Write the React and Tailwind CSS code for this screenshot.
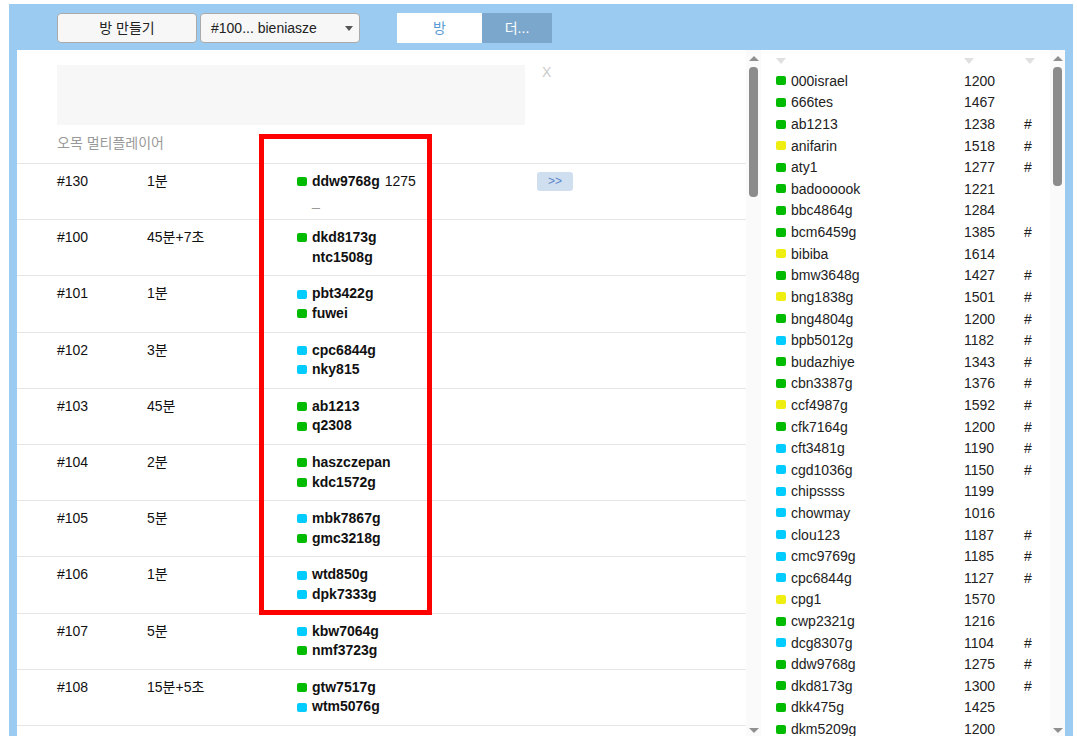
const FONT = "font-['Liberation_Sans','Noto_Sans_CJK_KR',sans-serif]";

const G = "bg-[#00bb00]";
const B = "bg-[#00ccff]";
const Y = "bg-[#eeee11]";

const rooms = [
  { id: "#100", time: "45분+7초", players: [[G, "dkd8173g"], [null, "ntc1508g"]] },
  { id: "#101", time: "1분", players: [[B, "pbt3422g"], [G, "fuwei"]] },
  { id: "#102", time: "3분", players: [[B, "cpc6844g"], [B, "nky815"]] },
  { id: "#103", time: "45분", players: [[G, "ab1213"], [G, "q2308"]] },
  { id: "#104", time: "2분", players: [[G, "haszczepan"], [G, "kdc1572g"]] },
  { id: "#105", time: "5분", players: [[B, "mbk7867g"], [G, "gmc3218g"]] },
  { id: "#106", time: "1분", players: [[B, "wtd850g"], [B, "dpk7333g"]] },
  { id: "#107", time: "5분", players: [[B, "kbw7064g"], [G, "nmf3723g"]] },
  { id: "#108", time: "15분+5초", players: [[G, "gtw7517g"], [B, "wtm5076g"]] },
];

const users = [
  [G, "000israel", "1200", ""],
  [G, "666tes", "1467", ""],
  [G, "ab1213", "1238", "#"],
  [Y, "anifarin", "1518", "#"],
  [G, "aty1", "1277", "#"],
  [G, "badoooook", "1221", ""],
  [G, "bbc4864g", "1284", ""],
  [G, "bcm6459g", "1385", "#"],
  [Y, "bibiba", "1614", ""],
  [G, "bmw3648g", "1427", "#"],
  [Y, "bng1838g", "1501", "#"],
  [G, "bng4804g", "1200", "#"],
  [B, "bpb5012g", "1182", "#"],
  [G, "budazhiye", "1343", "#"],
  [G, "cbn3387g", "1376", "#"],
  [Y, "ccf4987g", "1592", "#"],
  [G, "cfk7164g", "1200", "#"],
  [B, "cft3481g", "1190", "#"],
  [B, "cgd1036g", "1150", "#"],
  [B, "chipssss", "1199", ""],
  [B, "chowmay", "1016", ""],
  [B, "clou123", "1187", "#"],
  [B, "cmc9769g", "1185", "#"],
  [B, "cpc6844g", "1127", "#"],
  [Y, "cpg1", "1570", ""],
  [G, "cwp2321g", "1216", ""],
  [B, "dcg8307g", "1104", "#"],
  [G, "ddw9768g", "1275", "#"],
  [G, "dkd8173g", "1300", "#"],
  [G, "dkk475g", "1425", ""],
  [G, "dkm5209g", "1200", ""],
];

function Dot({ color }) {
  return <span className={`mr-[5px] inline-block h-[9px] w-[10px] shrink-0 rounded-[2px] ${color}`} />;
}

function Scrollbar({ thumb }) {
  return (
    <div className="flex w-[15px] shrink-0 flex-col items-center bg-[#fafafa] pt-[6px]">
      <span className="h-0 w-0 border-x-[5px] border-b-[5px] border-x-transparent border-b-[#8f8f8f]" />
      <div className={`mt-[6px] w-[9px] rounded-[4px] bg-[#8c8c8c] ${thumb}`} />
      <span className="mt-auto mb-[3px] h-0 w-0 border-x-[5px] border-t-[5px] border-x-transparent border-t-[#8f8f8f]" />
    </div>
  );
}

function SortMark() {
  return <span className="block h-0 w-0 border-x-[5px] border-t-[6px] border-x-transparent border-t-[#e0e0e0]" />;
}

function RoomRow({ room }) {
  return (
    <div className="flex border-b border-[#e5e5e5] pt-2 pb-2 pl-10 text-[14px] leading-[19.6px] text-[#111]">
      <div className="w-[90px]">{room.id}</div>
      <div className="w-[150px]">{room.time}</div>
      <div className="w-[240px]">
        {room.players.map(([color, name]) => (
          <div key={name} className="flex items-center font-bold">
            {color ? <Dot color={color} /> : <span className="w-[15px]" />}
            {name}
          </div>
        ))}
      </div>
    </div>
  );
}

export default function App() {
  return (
    <div className={`relative h-[736px] w-[1077px] overflow-hidden bg-white pt-1 pr-1 pl-[9px] ${FONT}`}>
      <div className="flex h-full flex-col bg-[#9bcbf0] px-2">
        <div className="flex h-[46px] shrink-0 items-start pt-[9px] pl-10 text-[14px] text-[#222]">
          <button className="h-[30px] w-[140px] rounded-[4px] border border-[#aaa] bg-[#f7f7f7]">방 만들기</button>
          <div className="ml-[3px] flex h-[30px] w-[160px] items-center justify-between rounded-[4px] border border-[#aaa] bg-[#f7f7f7] pr-[6px] pl-[10px]">
            <span>#100... bieniasze</span>
            <span className="h-0 w-0 border-x-[4px] border-t-[5px] border-x-transparent border-t-[#555]" />
          </div>
          <div className="ml-[37px] flex h-[30px] w-[85px] items-center justify-center bg-white text-[#5b9bd5]">방</div>
          <div className="flex h-[30px] w-[70px] items-center justify-center bg-[#7ba7cc] text-white">더...</div>
        </div>

        <div className="flex min-h-0 flex-1">
          <div className="flex min-w-0 flex-1 bg-white">
            <div className="min-w-0 flex-1 overflow-hidden">
              <div className="flex items-start pt-[15px] pl-10">
                <div className="h-[60px] w-[468px] bg-[#f7f7f7]" />
                <span className="ml-[17px] text-[14px] leading-[14px] text-[#ccc]">X</span>
              </div>
              <div className="border-b border-[#e5e5e5] pt-2 pb-[10px] pl-10 text-[14px] leading-[20px] text-[#999]">오목 멀티플레이어</div>
              <div className="flex border-b border-[#e5e5e5] pt-2 pb-2 pl-10 text-[14px] leading-[19.6px] text-[#111]">
                <div className="w-[90px]">#130</div>
                <div className="w-[150px]">1분</div>
                <div className="w-[240px]">
                  <div className="flex items-center">
                    <Dot color={G} />
                    <span className="font-bold">ddw9768g</span>
                    <span className="ml-[5px]">1275</span>
                  </div>
                  <div className="pl-[15px] text-[#999]">_</div>
                </div>
                <button className="h-[19px] w-[36px] rounded-[3px] bg-[#d0dff0] text-[12px] leading-[19px] text-[#5c85c8]">&gt;&gt;</button>
              </div>
              {rooms.map((room) => (
                <RoomRow key={room.id} room={room} />
              ))}
            </div>
            <Scrollbar thumb="h-[130px]" />
          </div>

          <div className="flex w-[304px] shrink-0 bg-white">
            <div className="min-w-0 flex-1 overflow-hidden pl-[15px] text-[14px] text-[#222]">
              <div className="flex h-[20px] items-center pt-[1px]">
                <div className="w-[188px] pl-[0px]"><SortMark /></div>
                <div className="w-[61px]"><SortMark /></div>
                <SortMark />
              </div>
              {users.map(([color, name, rating, mark]) => (
                <div key={name} className="flex h-[21.62px] items-center leading-[20px]">
                  <div className="flex w-[188px] items-center">
                    <Dot color={color} />
                    {name}
                  </div>
                  <div className="w-[60px]">{rating}</div>
                  <div>{mark}</div>
                </div>
              ))}
            </div>
            <Scrollbar thumb="h-[119px]" />
          </div>
        </div>
      </div>

      {/* annotation frame */}
      <div className="absolute top-[134px] left-[259px] h-[481px] w-[173px] border-[5px] border-[#ff0000]" />
    </div>
  );
}
